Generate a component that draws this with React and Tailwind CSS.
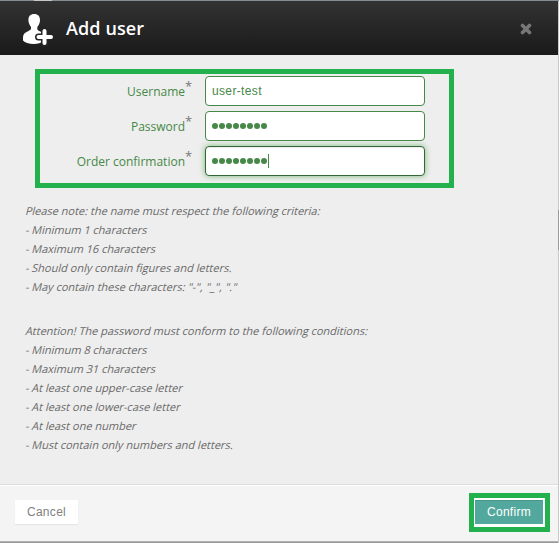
const nameRules = [
  'Please note: the name must respect the following criteria:',
  '- Minimum 1 characters',
  '- Maximum 16 characters',
  '- Should only contain figures and letters.',
  '- May contain these characters: "-", "_", "."',
];

const passwordRules = [
  'Attention! The password must conform to the following conditions:',
  '- Minimum 8 characters',
  '- Maximum 31 characters',
  '- At least one upper-case letter',
  '- At least one lower-case letter',
  '- At least one number',
  '- Must contain only numbers and letters.',
];

function Rules({ lines }) {
  return (
    <div className="text-[11px] leading-[19px] text-[#696969]">
      {lines.map((text) => (
        <p key={text} className="-skew-x-14 whitespace-nowrap">{text}</p>
      ))}
    </div>
  );
}

function Field({ label, focused, children }) {
  return (
    <div className="flex h-[30px]">
      <div className="flex w-[152px] justify-end pt-[7px] text-[12px] leading-[18px] text-[#468847]">
        <span>{label}</span>
        <span className="-mt-[6px] w-[7px] text-[13px] text-[#777777]">*</span>
      </div>
      <div
        className={`ml-[13px] flex w-[220px] items-center rounded-[4px] border bg-white pl-[6px] font-['Liberation_Sans',sans-serif] text-[13px] leading-[18px] text-[#468847] ${
          focused
            ? 'border-[#356635] shadow-[inset_0_1px_1px_rgba(0,0,0,0.075),0_0_6px_#7aba7b]'
            : 'border-[#468847]'
        }`}
      >
        {children}
      </div>
    </div>
  );
}

function Dots() {
  return (
    <span className="flex gap-px pr-px">
      {Array.from({ length: 8 }, (_, i) => (
        <span key={i} className="size-[6px] rounded-full bg-[#468847]" />
      ))}
    </span>
  );
}

export default function App() {
  return (
    <div className="flex h-[543px] w-[559px] flex-col overflow-hidden bg-[#eeeeee] font-['Open_Sans',sans-serif]">
      <div className="flex h-px shrink-0 bg-[#858c92]">
        <span className="ml-[34px] w-[18px] bg-[#c8c8c4]" />
      </div>
      <div className="flex min-h-0 flex-1">
        <div className="flex w-[558px] flex-col">
          <header className="flex h-[54px] shrink-0 items-center bg-linear-to-b from-[#333333] to-[#1a1a1a]">
            <svg className="ml-[22px] mt-[4px]" width="32" height="32" viewBox="0 0 32 32">
              <path
                fill="#fff"
                d="M12.2 0C8.4 0 6.4 2.3 6.4 6c0 2.8 1.2 5.2 2.6 7v1.6c0 1.3-1 1.7-2.5 2.3C2.8 18.3 1 20 1 23.5v2.9c2 2.3 5.7 3.5 10.7 3.5 4.3 0 7.5-1 9.3-2.9V20c-1-1.7-2.4-2.4-3.9-3-1.2-.6-1.8-1-1.8-2.4V13C16.9 11.2 18 8.8 18 6c0-3.7-2-6-5.8-6Z"
              />
              <path d="M22.5 17v12M16.5 23h12" stroke="#252525" strokeWidth="7" strokeLinecap="round" />
              <path d="M22.5 17v12M16.5 23H29" stroke="#fff" strokeWidth="4" strokeLinecap="round" />
            </svg>
            <h1 className="ml-[12px] text-[18px] font-semibold leading-[24px] tracking-[0.1px] text-white">Add user</h1>
            <svg className="ml-auto mr-[26px] mt-[2px]" width="12" height="12" viewBox="0 0 12 12">
              <path d="M2.5 2.5l7 7M9.5 2.5l-7 7" stroke="#777777" strokeWidth="3.6" strokeLinecap="round" />
            </svg>
          </header>
          <main className="h-[429px] shrink-0 pt-[14px]">
            <section className="ml-[35px] flex h-[119px] w-[419px] flex-col gap-[5px] border-[5px] border-[#22b14c] pt-[2px]">
              <Field label="Username"><span className="text-[12px] tracking-[0.35px]">user-test</span></Field>
              <Field label="Password"><Dots /></Field>
              <Field label="Order confirmation" focused>
                <Dots />
                <span className="h-[14px] w-px bg-[#468847]" />
              </Field>
            </section>
            <div className="ml-[26px] mt-[13px] flex flex-col items-start gap-[25px]">
              <Rules lines={nameRules} />
              <Rules lines={passwordRules} />
            </div>
          </main>
          <footer className="flex h-[57px] shrink-0 items-start justify-between border-t border-[#dddddd] bg-[#f4f4f4] font-['Liberation_Sans',sans-serif] text-[12px] shadow-[inset_0_1px_0_#ffffff]">
            <button className="ml-[15px] mt-[15px] h-[24px] w-[63px] bg-white leading-[24px] tracking-[0.3px] text-[#808080] shadow-[0_1px_1px_rgba(0,0,0,0.06)]">Cancel</button>
            <div className="mr-[8px] mt-[8px] flex h-[39px] w-[81px] border-[5px] border-[#22b14c] bg-white pl-px pt-[2px]">
              <button className="h-[24px] w-[68px] border-t border-[#4a968c] bg-[#53a89d] leading-[21px] tracking-[0.3px] text-white">Confirm</button>
            </div>
          </footer>
          <div className="h-px bg-[#b0b0b0]" />
          <div className="h-px bg-[#999999]" />
        </div>
        <div className="flex w-px flex-col bg-[#c8c8c8]">
          <span className="mt-[209px] h-[40px] bg-[#9a9a9a]" />
        </div>
      </div>
    </div>
  );
}
